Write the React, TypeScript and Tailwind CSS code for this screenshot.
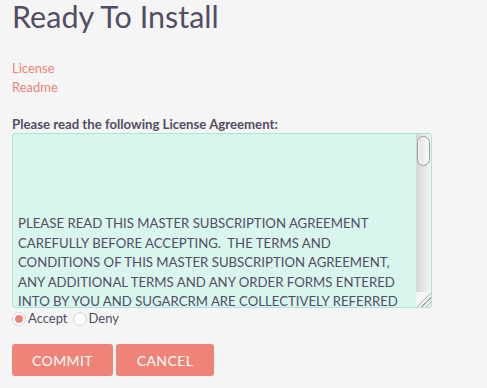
import { useState } from 'react';

const LICENSE_TEXT =
  '\n\n\n\nPLEASE READ THIS MASTER SUBSCRIPTION AGREEMENT CAREFULLY BEFORE ACCEPTING.  THE TERMS AND CONDITIONS OF THIS MASTER SUBSCRIPTION AGREEMENT, ANY ADDITIONAL TERMS AND ANY ORDER FORMS ENTERED INTO BY YOU AND SUGARCRM ARE COLLECTIVELY REFERRED TO AS THE "AGREEMENT".  BY ACCEPTING THIS AGREEMENT, YOU AGREE TO BE BOUND BY ITS TERMS.';

function Radio({ checked, onClick, label }: { checked: boolean; onClick: () => void; label: string }) {
  return (
    <label className="flex cursor-pointer items-center" onClick={onClick}>
      <span className="flex h-[14px] w-[14px] items-center justify-center rounded-full border border-[#d4d4d4] bg-white">
        {checked && <span className="h-[8px] w-[8px] rounded-full bg-[#f08377]" />}
      </span>
      <span className="ml-[2px]">{label}</span>
    </label>
  );
}

export default function App() {
  const [choice, setChoice] = useState('accept');

  return (
    <div className="min-h-screen bg-[#f5f5f5] px-3 text-[#534d64]" style={{ fontFamily: 'Lato, "Open Sans", sans-serif' }}>
      <h1 className="pt-[1px] text-[30.5px] leading-[30px]">Ready To Install</h1>

      <div className="mt-[28px] flex flex-col text-[13px] leading-[19px] text-[#f08377]">
        <a href="#">License</a>
        <a href="#">Readme</a>
      </div>

      <div className="mt-[18px] text-[13.2px] font-bold leading-[19px]">
        Please read the following License Agreement:
      </div>

      {/* textarea with a drawn scrollbar */}
      <div className="-mt-[1px] flex h-[175px] w-[420px] overflow-hidden rounded-[3px] border border-[#a5e8d6] bg-[#d8f5ee]">
        <textarea
          readOnly
          defaultValue={LICENSE_TEXT}
          className="block h-full flex-1 resize-none overflow-hidden bg-transparent pl-[5px] pt-[2px] text-[13.2px] leading-[19.5px] text-[#534d64] outline-none"
        />
        <div className="flex w-[15px] flex-col">
          <div className="flex-1 bg-[linear-gradient(to_right,#d6d6d6,#f4f4f4)] pt-[2px]">
            <div className="mx-auto h-[30px] w-[13px] rounded-[7px] border border-[#9a9a9a] bg-[linear-gradient(to_right,#e4e4e4,#f8f8f8)] shadow-[inset_0_0_0_1px_#f4f4f4]" />
          </div>
          <div className="h-[15px] bg-[#f4f4f4]">
            <div className="h-full w-full bg-[repeating-linear-gradient(135deg,#f4f4f4_0px,#f4f4f4_2px,#a8a8a8_2px,#a8a8a8_3px)] [clip-path:polygon(100%_0,100%_100%,0_100%)]" />
          </div>
        </div>
      </div>

      <div className="mt-[1px] flex items-center text-[13px] leading-[19px]">
        <Radio checked={choice === 'accept'} onClick={() => setChoice('accept')} label="Accept" />
        <span className="ml-[5px]">
          <Radio checked={choice === 'deny'} onClick={() => setChoice('deny')} label="Deny" />
        </span>
      </div>

      <div className="mt-[16px] flex gap-[3px]">
        <button className="h-[32px] w-[101px] rounded-[3px] bg-[#f08377] text-[14px] tracking-[0.4px] text-white">
          COMMIT
        </button>
        <button className="h-[32px] w-[98px] rounded-[3px] bg-[#f08377] text-[14px] tracking-[0.4px] text-white">
          CANCEL
        </button>
      </div>
    </div>
  );
}
